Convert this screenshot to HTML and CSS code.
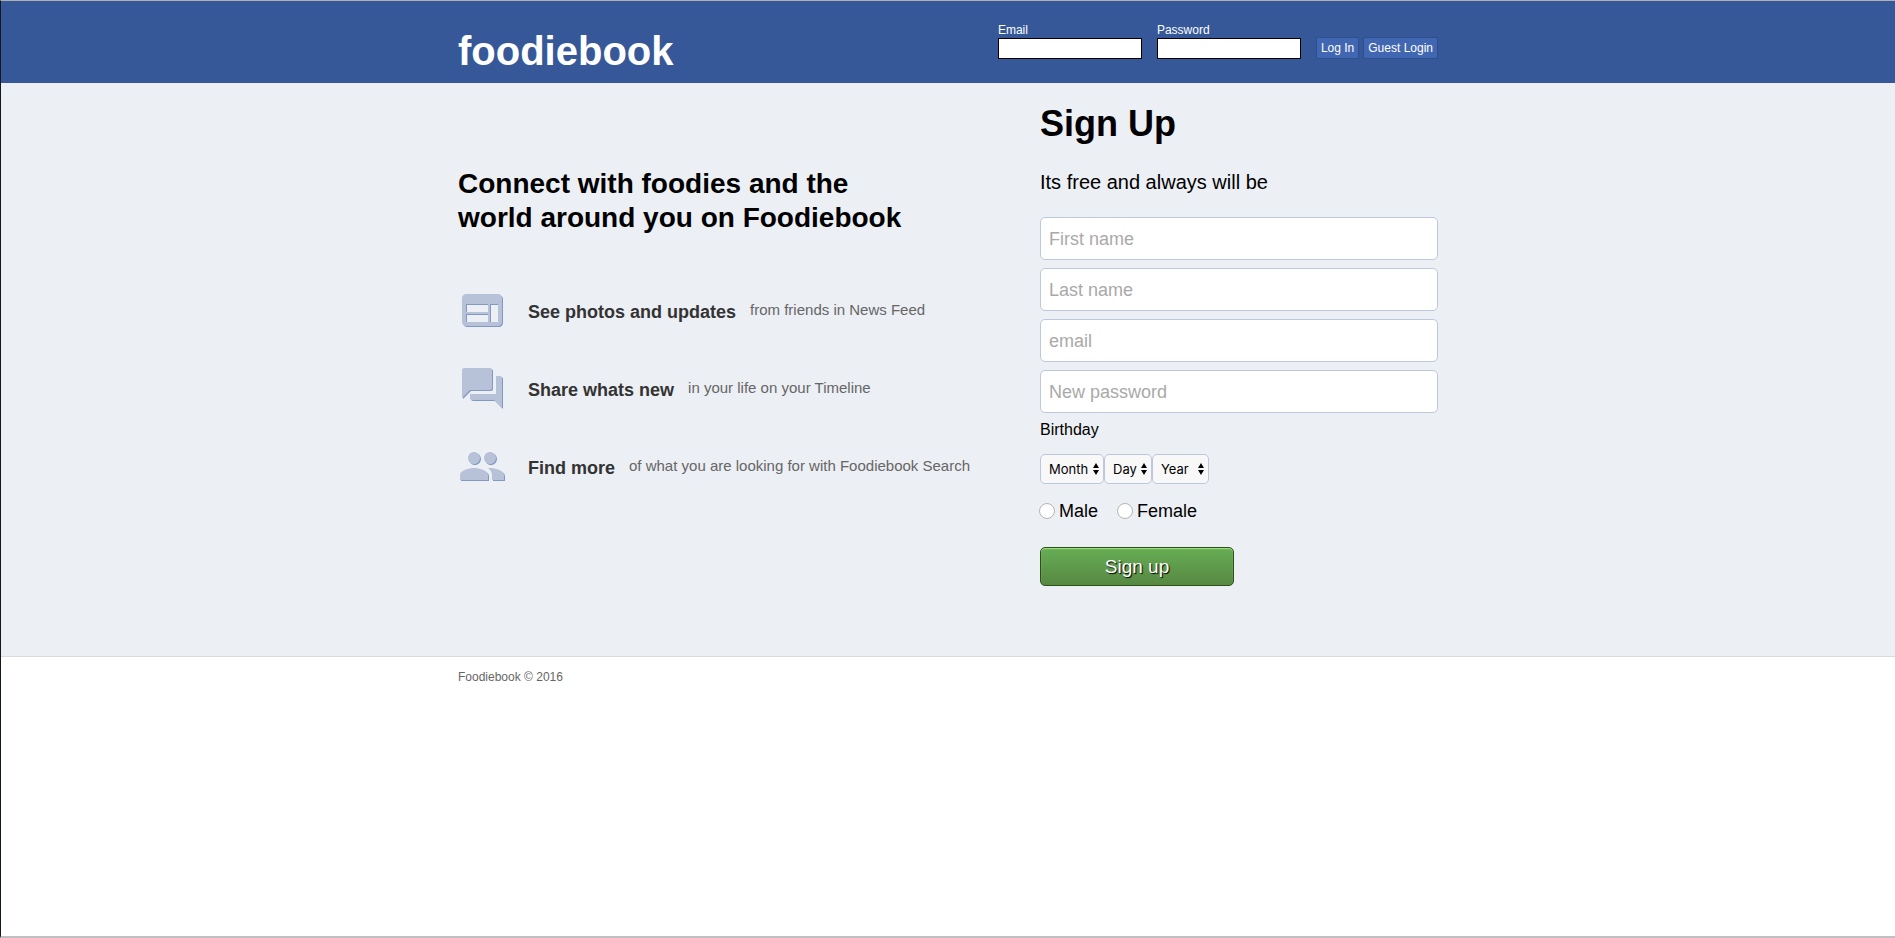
FILE: index.html
```html
<!DOCTYPE html>
<html lang="en">
<head>
<meta charset="utf-8">
<title>Foodiebook</title>
<link rel="stylesheet" href="styles.css">
</head>
<body>
<header class="header">
  <div class="container header-inner">
    <h1 class="logo">foodiebook</h1>
    <form class="login">
      <div class="login-field">
        <label for="login-email">Email</label>
        <input id="login-email" type="text">
      </div>
      <div class="login-field">
        <label for="login-password">Password</label>
        <input id="login-password" type="password">
      </div>
      <div class="login-actions">
        <button type="button" class="login-button">Log In</button>
        <button type="button" class="login-button">Guest Login</button>
      </div>
    </form>
  </div>
</header>
<main class="main">
  <div class="container main-inner">
    <section class="intro">
      <h2 class="intro-title">Connect with foodies and the world around you on Foodiebook</h2>
      <ul class="features">
        <li class="feature">
          <svg class="icon" viewBox="0 0 24 24" aria-hidden="true"><path d="M20 4H4c-1.100 0-1.990.900-1.990 2L2 18c0 1.100.900 2 2 2h16c1.100 0 2-.900 2-2V6c0-1.100-.900-2-2-2zm-5 14H4v-4h11v4zm0-5H4V9h11v4zm5 5h-4V9h4v9z"/></svg>
          <h3>See photos and updates</h3>
          <p>from friends in News Feed</p>
        </li>
        <li class="feature">
          <svg class="icon" viewBox="0 0 24 24" aria-hidden="true"><path d="M21 6h-2v9H6v2c0 .55.45 1 1 1h11l4 4V7c0-.55-.45-1-1-1zm-4 6V3c0-.55-.45-1-1-1H3c-.55 0-1 .45-1 1v14l4-4h10c.55 0 1-.45 1-1z"/></svg>
          <h3>Share whats new</h3>
          <p>in your life on your Timeline</p>
        </li>
        <li class="feature">
          <svg class="icon" viewBox="0 0 24 24" aria-hidden="true"><path d="M16 11c1.660 0 2.990-1.340 2.990-3S17.660 5 16 5c-1.660 0-3 1.340-3 3s1.340 3 3 3zm-8 0c1.660 0 2.990-1.340 2.990-3S9.660 5 8 5C6.340 5 5 6.340 5 8s1.340 3 3 3zm0 2c-2.330 0-7 1.170-7 3.500V19h14v-2.500c0-2.330-4.670-3.500-7-3.500zm8 0c-.290 0-.620.020-.970.050 1.160.840 1.970 1.970 1.970 3.450V19h6v-2.500c0-2.330-4.670-3.500-7-3.500z"/></svg>
          <h3>Find more</h3>
          <p>of what you are looking for with Foodiebook Search</p>
        </li>
      </ul>
    </section>
    <form class="signup">
      <h2 class="signup-title">Sign Up</h2>
      <p class="signup-subtitle">Its free and always will be</p>
      <div class="fields">
        <input class="field" type="text" placeholder="First name" aria-label="First name">
        <input class="field" type="text" placeholder="Last name" aria-label="Last name">
        <input class="field" type="text" placeholder="email" aria-label="email">
        <input class="field" type="password" placeholder="New password" aria-label="New password">
      </div>
      <label class="birthday-label" for="month">Birthday</label>
      <div class="birthday">
        <select class="select month" id="month"><option>Month</option></select>
        <select class="select day" aria-label="Day"><option>Day</option></select>
        <select class="select year" aria-label="Year"><option>Year</option></select>
      </div>
      <div class="genders">
        <label class="gender"><input type="radio" name="gender">Male</label>
        <label class="gender"><input type="radio" name="gender">Female</label>
      </div>
      <button type="button" class="signup-button">Sign up</button>
    </form>
  </div>
</main>
<footer class="footer">
  <div class="container">Foodiebook © 2016</div>
</footer>
</body>
</html>
```
FILE: styles.css
```css
* {
  box-sizing: border-box;
}

body {
  display: flex;
  flex-direction: column;
  min-height: 100vh;
  margin: 0;
  border-top: 1px solid #b0b0b0;
  border-bottom: 2px solid #c0c0c0;
  border-left: 1px solid #14181f;
  background: #fff;
  color: #000;
  font-family: "Liberation Sans", Arial, sans-serif;
}

h1, h2, h3, p, ul {
  margin: 0;
  padding: 0;
}

input, button, select {
  font-family: inherit;
}

.container {
  width: 100%;
  max-width: 980px;
  margin: 0 auto;
}

.header {
  background: #365899;
  color: #fff;
}

.header-inner {
  display: flex;
  justify-content: space-between;
  align-items: flex-start;
  padding: 21px 0 17px;
}

.logo {
  padding-top: 14px;
  font-size: 40px;
  line-height: 30px;
}

.login {
  display: flex;
  align-items: flex-end;
  gap: 15px;
}

.login-field {
  display: flex;
  flex-direction: column;
  font-size: 12px;
  line-height: 16px;
}

.login-field input {
  width: 144px;
  height: 21px;
  padding: 1px 4px;
  border: 1px solid #000;
  background: #fff;
}

.login-actions {
  display: flex;
  gap: 4px;
}

.login-button {
  height: 22px;
  padding: 0 4px;
  border: 1px solid #2e4f8f;
  border-radius: 2px;
  background: #4267b2;
  color: #fff;
  font-size: 12px;
}

.main {
  border-bottom: 1px solid #d9dbe1;
  background: #eceff4;
}

.main-inner {
  display: flex;
  justify-content: space-between;
  padding: 21px 0 70px;
}

.intro {
  padding-top: 63px;
}

.intro-title {
  max-width: 460px;
  font-size: 28px;
  line-height: 34px;
}

.features {
  display: flex;
  flex-direction: column;
  gap: 30px;
  padding-top: 51px;
  list-style: none;
}

.feature {
  display: flex;
  align-items: center;
}

.icon {
  width: 48px;
  height: 48px;
  margin-right: 22px;
  fill: #b7c2d9;
  filter: drop-shadow(1px 1px 0 #8199c6);
}

.feature h3 {
  margin-right: 14px;
  padding-top: 4px;
  color: #333;
  font-size: 18px;
  line-height: 20px;
}

.feature p {
  color: #666;
  font-size: 15px;
  line-height: 20px;
}

.signup {
  width: 398px;
}

.signup-title {
  font-size: 36px;
  line-height: 40px;
}

.signup-subtitle {
  padding: 26px 0 23px;
  font-size: 20px;
  line-height: 24px;
}

.fields {
  display: flex;
  flex-direction: column;
  gap: 8px;
}

.field {
  width: 100%;
  height: 43px;
  padding: 9px 8px 7px;
  border: 1px solid #bdc7dd;
  border-radius: 5px;
  background: #fff;
  font-size: 18px;
}

.field::placeholder {
  color: #a9a9a9;
}

.birthday-label {
  display: block;
  padding: 7px 0 14px;
  font-size: 16px;
  line-height: 20px;
}

.birthday {
  display: flex;
}

.select {
  height: 30px;
  padding: 0 8px;
  appearance: none;
  border: 1px solid #bdc7dd;
  border-radius: 5px;
  background: #f8f8f8 url("data:image/svg+xml,%3Csvg xmlns='http://www.w3.org/2000/svg' width='6' height='12'%3E%3Cpath d='M0 5L3 0L6 5ZM0 7L3 12L6 7Z'/%3E%3C/svg%3E") no-repeat right 4px center;
  color: #000;
  font-family: Inter, sans-serif;
  font-size: 13px;
}

.month {
  width: 64px;
}

.day {
  width: 48px;
}

.year {
  width: 57px;
}

.genders {
  display: flex;
  gap: 20px;
  padding: 16px 0 25px;
}

.gender {
  display: flex;
  align-items: center;
  gap: 4px;
  font-size: 18px;
  line-height: 22px;
}

.gender input {
  width: 16px;
  height: 16px;
  margin: 0 0 0 -1px;
  appearance: none;
  border: 1px solid #b5b5b5;
  border-radius: 50%;
  background: #fff;
}

.gender input:checked {
  border: 5px solid #4267b2;
}

.signup-button {
  display: block;
  width: 194px;
  height: 39px;
  padding: 0;
  border: 1px solid #2c5115;
  border-radius: 5px;
  background: linear-gradient(#67ae55, #578843);
  box-shadow: inset 0 1px 1px #a4e388;
  color: #fff;
  font-size: 19px;
  text-shadow: 1px 1px 1px #000;
}

.footer {
  padding: 12px 0;
  color: #666;
  font-size: 12px;
  line-height: 16px;
}
```
